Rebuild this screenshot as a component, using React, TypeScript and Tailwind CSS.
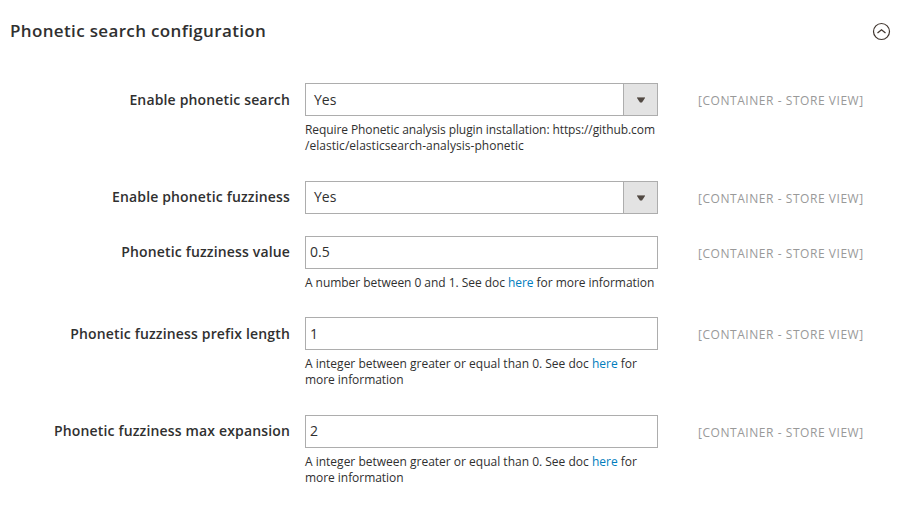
import React from "react";

type Row = {
  label: string;
  value: string;
  kind: "select" | "input";
  note?: React.ReactNode;
  gap: string;
  line: string;
};

const Here = () => <a className="text-[#007dbd]">here</a>;

const integerNote = (
  <>
    A integer between greater or equal than 0. See doc <Here /> for
    <br />
    <span className="tracking-[-0.05px]">more information</span>
  </>
);

const rows: Row[] = [
  {
    label: "Enable phonetic search",
    value: "Yes",
    kind: "select",
    gap: "h-[98px]",
    line: "leading-[33px]",
    note: (
      <>
        <span className="tracking-[-0.09px]">Require Phonetic analysis plugin installation: https://github.com</span>
        <br />
        <span className="tracking-[0.035px]">/elastic/elasticsearch-analysis-phonetic</span>
      </>
    ),
  },
  {
    label: "Enable phonetic fuzziness",
    value: "Yes",
    kind: "select",
    gap: "h-[55px]",
    line: "leading-[31px]",
  },
  {
    label: "Phonetic fuzziness value",
    value: "0.5",
    kind: "input",
    gap: "h-[81px]",
    line: "leading-[31px]",
    note: (
      <span className="tracking-[-0.045px]">
        A number between 0 and 1. See doc <Here /> for more information
      </span>
    ),
  },
  {
    label: "Phonetic fuzziness prefix length",
    value: "1",
    kind: "input",
    gap: "h-[98px]",
    line: "leading-[33px]",
    note: integerNote,
  },
  {
    label: "Phonetic fuzziness max expansion",
    value: "2",
    kind: "input",
    gap: "h-[98px]",
    line: "leading-[31px]",
    note: integerNote,
  },
];

function Field({ row }: { row: Row }) {
  return (
    <div className={`flex items-start ${row.gap}`}>
      <div className={`w-[290px] text-right text-[14px] font-semibold tracking-[0.155px] whitespace-nowrap ${row.line}`}>
        {row.label}
      </div>
      <div className="ml-[15px] w-[353px]">
        <div className="flex h-[33px] border border-[#adadad] bg-white text-[14px]">
          <span
            className={`-mt-px flex-1 ${row.line} ${row.kind === "select" ? "pl-2" : "pl-1"}`}
          >
            {row.value}
          </span>
          {row.kind === "select" && (
            <span className="flex w-[34px] items-center justify-center border-l border-[#adadad] bg-[#e3e3e3]">
              <svg className="mt-px" width="8" height="6" viewBox="0 0 8 6">
                <path d="M0 0H8V1L5 5.5H3L0 1Z" fill="#514943" />
                <path d="M0 0H8V1H0Z" fill="#8d8782" />
              </svg>
            </span>
          )}
        </div>
        {row.note && <p className="mt-[6px] text-[12px] leading-[16px] whitespace-nowrap">{row.note}</p>}
      </div>
      <div className="ml-10 text-[12px] leading-[35px] tracking-[0.55px] text-[#999] whitespace-nowrap">
        [CONTAINER - STORE VIEW]
      </div>
    </div>
  );
}

export default function App() {
  return (
    <main className="h-[518px] w-[902px] overflow-hidden bg-white font-['Open_Sans',sans-serif] text-[#303030]">
      <header className="flex h-[83px] items-start justify-between pt-[19px] pr-[11px] pl-[10px]">
        <h2 className="text-[17px] font-semibold leading-[24px] tracking-[0.35px]">Phonetic search configuration</h2>
        <svg className="mt-[3px]" width="19" height="19" viewBox="0 0 19 19" fill="none" stroke="#41362f">
          <circle cx="9.5" cy="9.5" r="8" strokeWidth="1.2" />
          <path d="M5.5 11L9.5 7.8L13.5 11" strokeWidth="1.3" />
        </svg>
      </header>
      {rows.map((row) => (
        <Field key={row.label} row={row} />
      ))}
    </main>
  );
}
